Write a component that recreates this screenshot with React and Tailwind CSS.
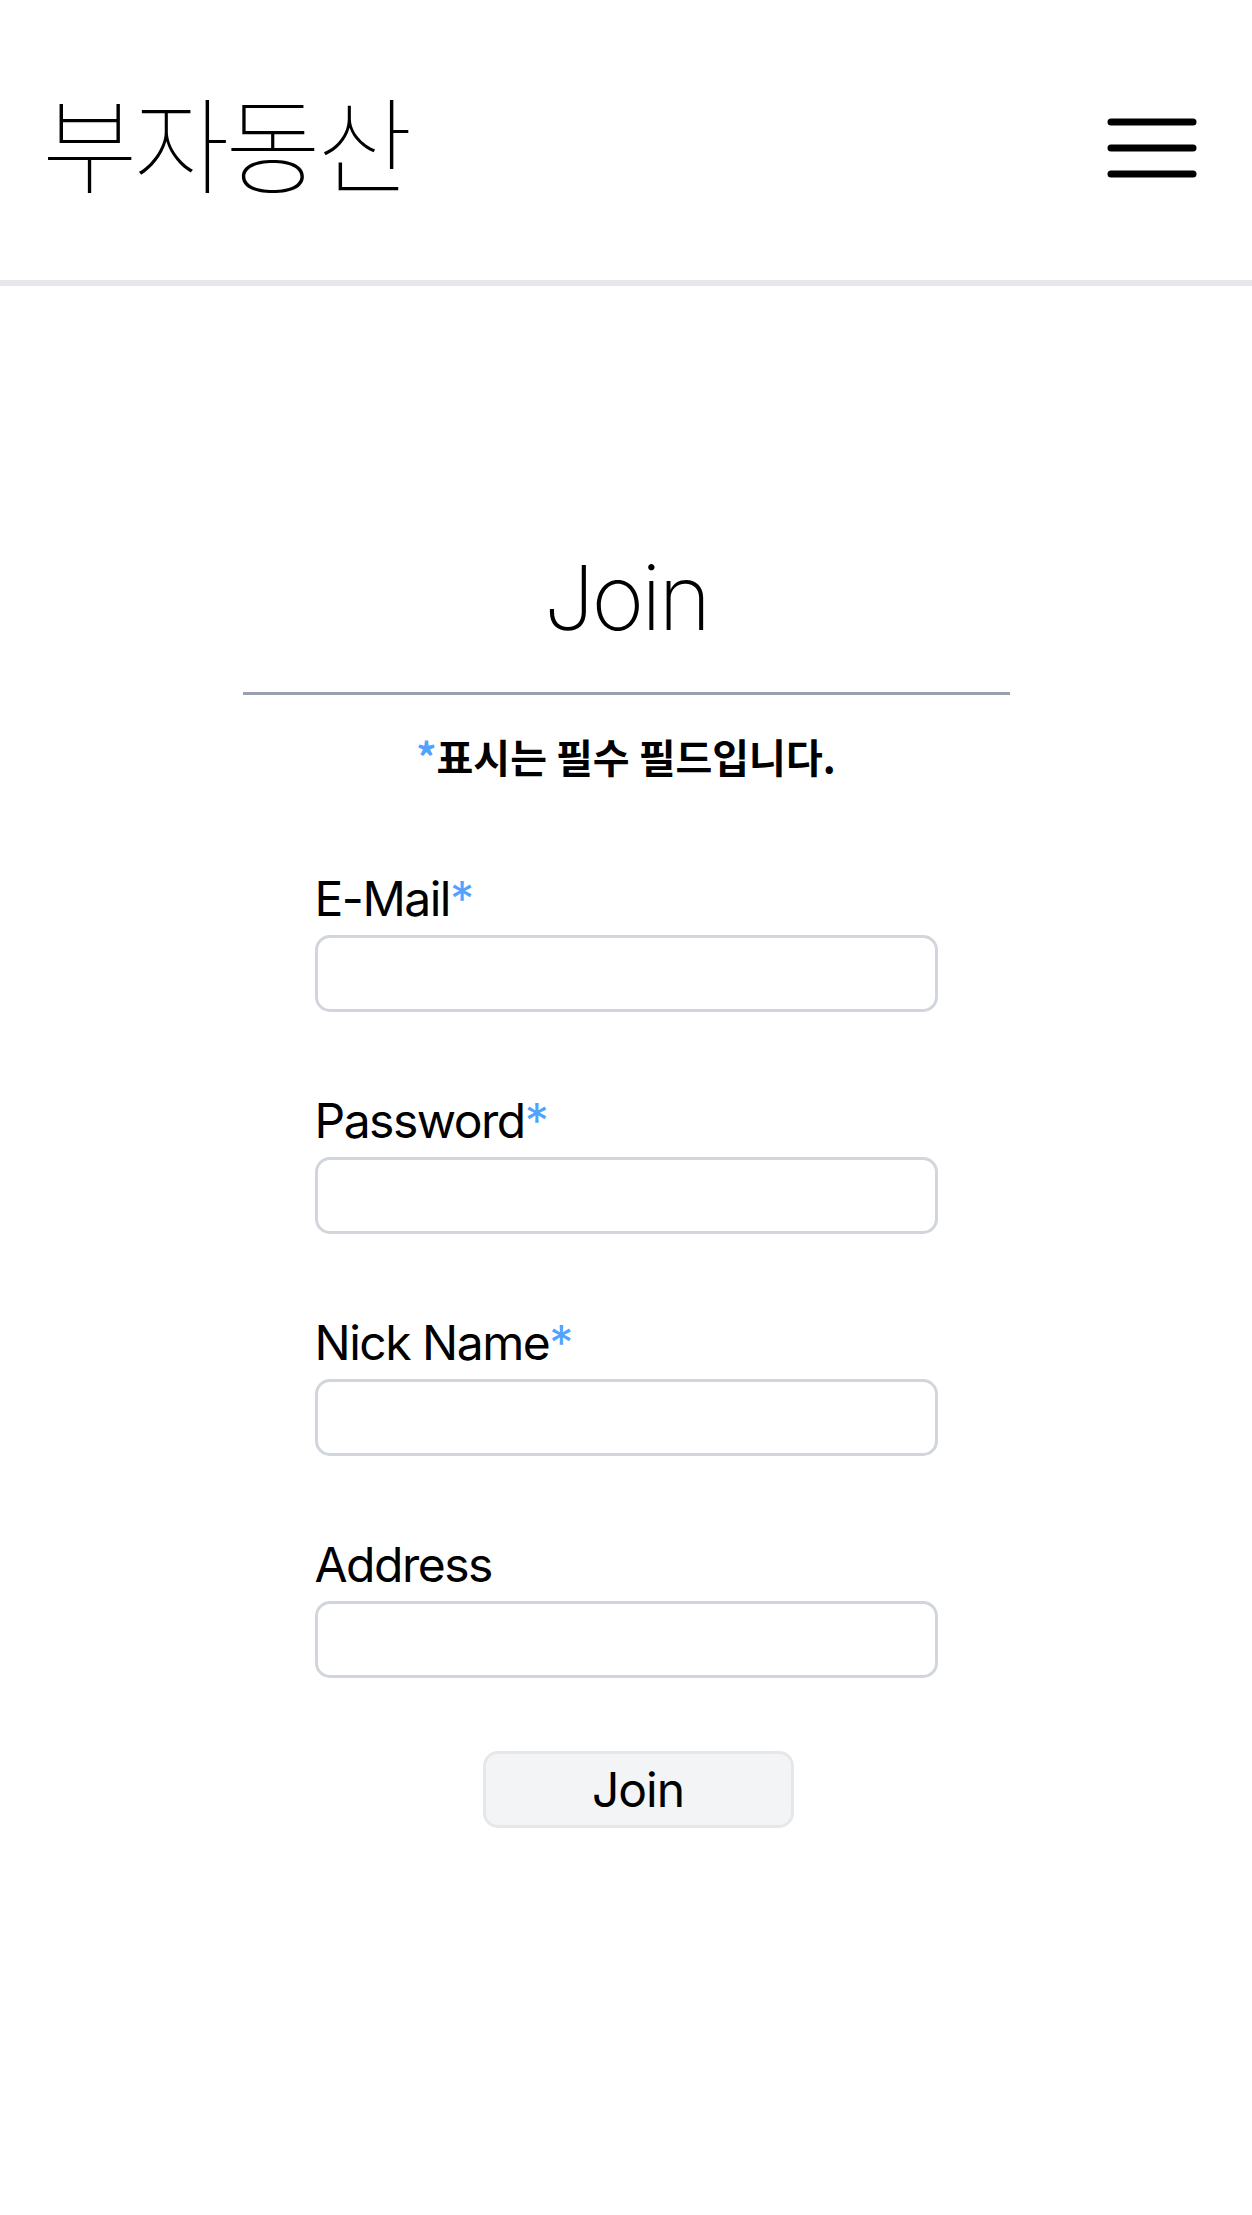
import React, { useState } from "react";

const Field = ({ label, required, type = "text", value, onChange }) => (
  <div className="mb-[73px] flex flex-col">
    <label className="text-[48px] leading-[72px] tracking-[-1.5px]">
      {label}
      {required && <span className="text-blue-400">*</span>}
    </label>
    <input
      type={type}
      value={value}
      onChange={onChange}
      className="h-[77px] w-full rounded-[15px] border-[3px] border-gray-300 bg-white px-4 text-[44px] outline-none"
    />
  </div>
);

const App = () => {
  const [form, setForm] = useState({
    email: "",
    password: "",
    nickname: "",
    address: "",
  });

  const update = (key) => (e) => setForm({ ...form, [key]: e.target.value });

  return (
    <div className="min-h-screen bg-white text-black font-['Inter','Noto_Sans_CJK_KR',sans-serif]">
      <header className="flex h-[286px] items-center justify-between border-b-[6px] border-gray-200 pl-[42px] pr-[55px] pt-[16px]">
        <h1 className="mb-[14px] font-['Noto_Sans_CJK_KR',sans-serif] text-[104px] font-thin leading-none tracking-[-4px]">
          부자동산
        </h1>
        <button className="flex items-center">
          <svg width="90" height="60" viewBox="0 0 90 60">
            <g stroke="black" strokeWidth="7" strokeLinecap="round">
              <line x1="4" y1="4" x2="86" y2="4" />
              <line x1="4" y1="30" x2="86" y2="30" />
              <line x1="4" y1="56" x2="86" y2="56" />
            </g>
          </svg>
        </button>
      </header>

      <main className="flex flex-col items-center pt-[267px] pb-[300px]">
        <h2 className="text-[90px] font-extralight leading-none tracking-[-3px]">Join</h2>
        <div className="mt-[49px] h-[3px] w-[767px] bg-gray-400" />
        <p className="mt-[41px] font-['Noto_Sans_CJK_KR',sans-serif] text-[40px] font-bold leading-[40px]">
          <span className="text-blue-400">*</span>표시는 필수 필드입니다.
        </p>

        <form
          onSubmit={(e) => e.preventDefault()}
          className="mt-[87px] w-[623px]"
        >
          <Field label="E-Mail" required type="email" value={form.email} onChange={update("email")} />
          <Field label="Password" required type="password" value={form.password} onChange={update("password")} />
          <Field label="Nick Name" required value={form.nickname} onChange={update("nickname")} />
          <Field label="Address" value={form.address} onChange={update("address")} />

          <div className="flex justify-center pl-[24px]">
            <button
              type="submit"
              className="h-[77px] w-[311px] rounded-[15px] border-[3px] border-gray-200 bg-gray-100 text-[48px] leading-none tracking-[-1px]"
            >
              Join
            </button>
          </div>
        </form>
      </main>
    </div>
  );
};

export default App;
